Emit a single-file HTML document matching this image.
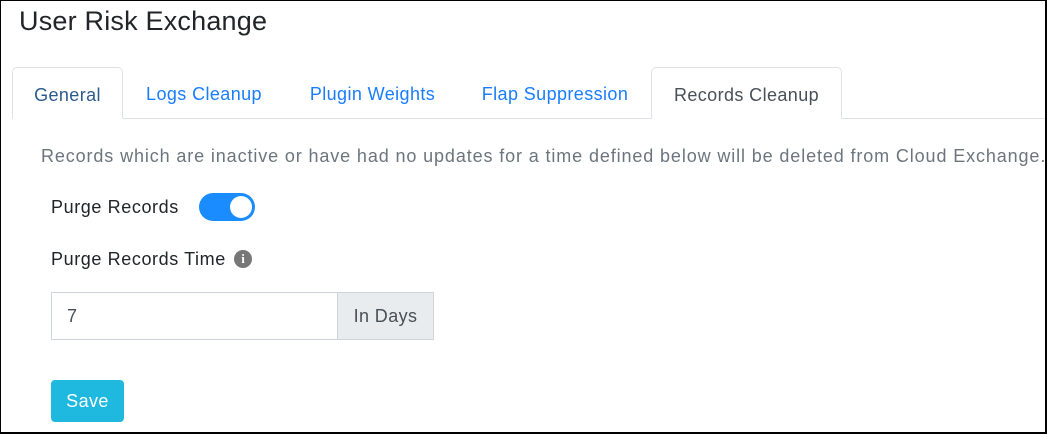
<!DOCTYPE html>
<html><head><style>
*{box-sizing:border-box;margin:0;padding:0}
html,body{width:1047px;height:435px;overflow:hidden;background:#fff}
body{font-family:"Liberation Sans",sans-serif;position:relative}
.frame{position:absolute;left:0;top:0;width:1047px;height:434px;border:1px solid #000;border-bottom:2px solid #000;border-right:2px solid #000;z-index:2}
.t{position:absolute;white-space:nowrap}
h1{position:absolute;left:19px;top:6px;font-size:27px;font-weight:400;color:#212529;letter-spacing:0.2px}
.tabline{position:absolute;left:12px;right:2px;top:118px;border-top:1px solid #dee2e6}
.tab{position:absolute;top:67px;height:52px;font-size:18px;color:#1a7dff;line-height:54px;text-align:center;letter-spacing:0.4px}
.act{border:1px solid #dee2e6;border-bottom:1px solid #fff;border-radius:5px 5px 0 0;background:#fff;color:#3d5f86}
.lb{font-size:18px;color:#212529;letter-spacing:0.6px}
</style></head><body>
<div class="frame"></div>
<h1>User Risk Exchange</h1>
<div class="tabline"></div>
<div class="tab act" style="left:12px;width:111px;color:#2c5a8c">General</div>
<div class="tab" style="left:135px;width:138px">Logs Cleanup</div>
<div class="tab" style="left:295px;width:155px">Plugin Weights</div>
<div class="tab" style="left:467px;width:176px">Flap Suppression</div>
<div class="tab act" style="left:651px;width:191px;color:#495057">Records Cleanup</div>
<div class="t" style="left:41px;top:146px;font-size:18px;color:#6c757d;letter-spacing:0.88px">Records which are inactive or have had no updates for a time defined below will be deleted from Cloud Exchange.</div>
<div class="t lb" style="left:51px;top:197px">Purge Records</div>
<div style="position:absolute;left:199px;top:193px;width:56px;height:28px;border-radius:14px;background:#1a8cff"></div>
<div style="position:absolute;left:230px;top:196px;width:22px;height:22px;border-radius:50%;background:#fff"></div>
<div class="t lb" style="left:51px;top:249px">Purge Records Time</div>
<div style="position:absolute;left:234px;top:250px;width:18px;height:18px;border-radius:50%;background:#777;color:#fff;font:bold 13px/18px 'Liberation Serif',serif;text-align:center">i</div>
<div style="position:absolute;left:51px;top:292px;width:287px;height:48px;border:1px solid #ced4da;font-size:18px;line-height:46px;padding-left:15px;color:#495057">7</div>
<div style="position:absolute;left:337px;top:292px;width:97px;height:48px;border:1px solid #ced4da;background:#e9ecef;font-size:18px;line-height:46px;text-align:center;color:#495057;letter-spacing:0.4px">In Days</div>
<div style="position:absolute;left:51px;top:380px;width:73px;height:42px;border-radius:4px;background:#1fb9df;color:#fff;font-size:18px;line-height:43px;text-align:center;letter-spacing:0.4px">Save</div>
</body></html>
